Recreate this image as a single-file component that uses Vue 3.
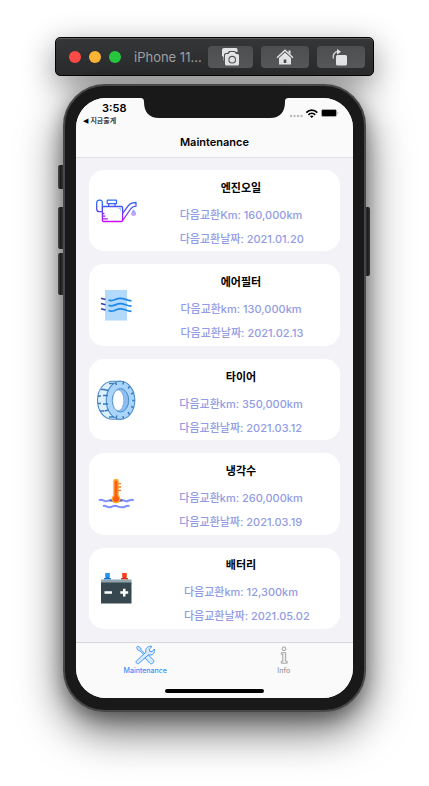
<script setup>
import { ref } from 'vue'

const activeTab = ref('maintenance')

const items = [
  { id: 'oil', title: '엔진오일', distance: '다음교환Km: 160,000km', date: '다음교환날짜: 2021.01.20' },
  { id: 'filter', title: '에어필터', distance: '다음교환km: 130,000km', date: '다음교환날짜: 2021.02.13' },
  { id: 'tire', title: '타이어', distance: '다음교환km: 350,000km', date: '다음교환날짜: 2021.03.12' },
  { id: 'coolant', title: '냉각수', distance: '다음교환km: 260,000km', date: '다음교환날짜: 2021.03.19' },
  { id: 'battery', title: '배터리', distance: '다음교환km: 12,300km', date: '다음교환날짜: 2021.05.02' }
]
</script>

<template>
  <div class="desktop">
    <header class="toolbar">
      <div class="lights">
        <button class="light red" type="button" aria-label="Close"></button>
        <button class="light yellow" type="button" aria-label="Minimize"></button>
        <button class="light green" type="button" aria-label="Zoom"></button>
      </div>
      <span class="device-name">iPhone 11...</span>
      <div class="tools">
        <button class="tool" type="button" aria-label="Screenshot">
          <svg width="18" height="18" viewBox="0 0 18 18">
            <path d="M2 0h12a1.500 1.500 0 0 1 1.500 1.500V4H14l-1-1H7L5.500 5H4a2 2 0 0 0-2 2v5.500H1.500V9L0 8V2a2 2 0 0 1 2-2z" fill="#e4e5e6" />
            <path d="M4.500 6h2L8 4h4.500L14 6h1.500A1.500 1.500 0 0 1 17 7.500V16a1.500 1.500 0 0 1-1.500 1.500h-11A1.500 1.500 0 0 1 3 16V7.500A1.500 1.500 0 0 1 4.500 6z" fill="#e4e5e6" />
            <circle cx="10.200" cy="11.700" r="3.300" fill="none" stroke="#55575a" stroke-width="1.100" />
          </svg>
        </button>
        <button class="tool" type="button" aria-label="Home">
          <svg width="18" height="18" viewBox="0 0 18 18">
            <path d="M1 9.700 9 2.200l8 7.500" fill="none" stroke="#e4e5e6" stroke-width="1.400" />
            <path d="M12.500 2.500h2v4l-2-2z" fill="#e4e5e6" />
            <path d="M9 4.500 15 10v6.500H3V10z" fill="#e4e5e6" />
            <path d="M7.700 11.500h2.600v3.500H7.700z" fill="#4b4d50" />
          </svg>
        </button>
        <button class="tool" type="button" aria-label="Rotate">
          <svg width="18" height="18" viewBox="0 0 18 18">
            <rect x="4" y="7" width="11" height="10.500" rx="1.500" fill="#e4e5e6" />
            <path d="M1.200 10.500C.5 6 3 3.700 6 3.700" fill="none" stroke="#e4e5e6" stroke-width="1.300" />
            <path d="M5 1l4 2.700-4 2.700z" fill="#e4e5e6" />
          </svg>
        </button>
      </div>
    </header>

    <div class="phone">
      <i class="side mute"></i>
      <i class="side volume-up"></i>
      <i class="side volume-down"></i>
      <i class="side power"></i>

      <div class="screen">
        <div class="top">
          <div class="status">
            <div class="status-left">
              <span class="clock">3:58</span>
              <button class="back" type="button"><span class="arrow">◀</span>지금줄게</button>
            </div>
            <svg class="notch" width="149" height="20" viewBox="0 0 149 20">
              <path d="M0 0h149c-3 0-4 1-4 4 0 10-5 16-15 16H19C9 20 4 14 4 4 4 1 3 0 0 0z" fill="#191919" />
            </svg>
            <div class="status-right">
              <svg width="50" height="11" viewBox="0 0 50 11">
                <g fill="#b9b9bb">
                  <circle cx="2" cy="8" r="1.200" /><circle cx="5.500" cy="8" r="1.200" />
                  <circle cx="9" cy="8" r="1.200" /><circle cx="12.500" cy="8" r="1.200" />
                </g>
                <g fill="none" stroke="#000" stroke-width="1.700">
                  <path d="M17.300 4.600c3-3.200 8-3.200 11 0" />
                  <path d="M19.400 6.800c1.900-1.900 4.900-1.900 6.800 0" />
                </g>
                <path d="M21 8.200c1-.9 2.600-.9 3.600 0l-1.800 1.900z" fill="#000" />
                <rect x="32.500" y="1.500" width="15" height="7" rx="1.500" fill="#6d6d6f" stroke="#a2a2a4" />
                <rect x="33" y="2" width="14" height="6" rx="1" fill="#000" />
                <path d="M48.500 3.700c1 .4 1 2.200 0 2.600z" fill="#8e8e90" />
              </svg>
            </div>
          </div>
          <h1 class="nav-title">Maintenance</h1>
        </div>

        <main class="list">
          <article v-for="item in items" :key="item.id" class="card">
            <svg v-if="item.id === 'oil'" class="picture" viewBox="0 0 42 42">
              <defs>
                <linearGradient id="oil-line" gradientUnits="userSpaceOnUse" x1="0" y1="9" x2="0" y2="32">
                  <stop offset="0" stop-color="#2674f5" />
                  <stop offset=".5" stop-color="#5746f2" />
                  <stop offset="1" stop-color="#cf08f5" />
                </linearGradient>
                <linearGradient id="oil-drop" x1="0" y1="0" x2="0" y2="1">
                  <stop offset="0" stop-color="#78b9f8" />
                  <stop offset="1" stop-color="#dc9df8" />
                </linearGradient>
              </defs>
              <g fill="none" stroke="url(#oil-line)" stroke-width="1.300" stroke-linejoin="round">
                <path d="M7.300 19.500V12.500a2 2 0 0 0-2-2.300H4.500c-2 0-2.800 1-2.800 2.800v6c0 1.700 1 2.700 2.600 2.700h3" />
                <rect x="12.200" y="10.200" width="9.300" height="3.500" rx=".5" />
                <path d="M13.700 13.700v2.600M20 13.700v2.600" />
                <rect x="7.400" y="16.500" width="20.200" height="15" rx="1.300" />
                <path d="M7.400 23.500h2M7.400 26.200h3M7.400 28.900h5.500" />
                <path d="M27.600 23.300c2.800-2.700 5-8 8-9.700 1.500-.9 3.500-1 5.400-1.100v3.600c-2.500-.1-3.600.8-5 2.400L27.600 30.500" />
              </g>
              <path d="M22 18h4v4c-.6-2.500-1.500-3.500-4-4z" fill="#9acdfb" />
              <path d="M38.600 19.200c1.300 1.900 2.500 3 2.500 4.400a2.500 2.500 0 0 1-5 0c0-1.400 1.200-2.500 2.500-4.400z" fill="url(#oil-drop)" />
            </svg>

            <svg v-else-if="item.id === 'filter'" class="picture" viewBox="0 0 42 42">
              <rect x="10" y="6" width="22" height="30.500" fill="#b3dafb" />
              <g fill="none" stroke="#1e88ea" stroke-width="1.700">
                <path v-for="y in [16, 21.300, 26.600]" :key="y" :d="`M13.500 ${y}c5 2.300 7-2 12-1.700 4 .2 6 2 11 2.500`" />
              </g>
              <g fill="none" stroke="#303fa5" stroke-width="1.700">
                <path v-for="y in [14.300, 19.500, 24.800]" :key="y" :d="`M6 ${y}l4.500 1.200`" />
              </g>
            </svg>

            <svg v-else-if="item.id === 'tire'" class="picture" viewBox="0 0 42 42">
              <path d="M26 2.300H18C9 2.300 2.500 10.500 2.500 21.300S9 40.300 18 40.300h8z" fill="#dcefff" stroke="#4a8ac8" stroke-width="1.100" />
              <ellipse cx="25.500" cy="21.300" rx="14.300" ry="19" fill="#a9d5fc" stroke="#4a8ac8" stroke-width="1.100" />
              <ellipse cx="25.500" cy="21.300" rx="8.200" ry="11.700" fill="#8bbdf0" stroke="#4a8ac8" />
              <ellipse cx="23.200" cy="21.300" rx="5.500" ry="10.400" fill="#fff" stroke="#6ba3da" stroke-width=".6" />
              <g stroke="#3979b8" stroke-width="1.500" fill="none">
                <path d="M14 4.500h5M6 10.500h4M8.500 10.500l5 1M3 17h3M8 16.500h5M3 24.500h3M8 25h5M5 32h4M9.500 32l4-1M14 38h5" />
                <path d="M20.500 3.500l1 2.500M28.500 2.700L28 5.500M34.500 7.500L33 9.500M38.300 14l-2.300 1.200M39.800 21.500h-2.500M38.500 28.500l-2.300-1M34.500 35.300L33 33M28.500 39.700l-.5-2.500M21 39l1-2.500" />
              </g>
            </svg>

            <svg v-else-if="item.id === 'coolant'" class="picture" viewBox="0 0 42 42">
              <g fill="none" stroke="#7e90ff" stroke-width="2">
                <path d="M4 27.500c3-2.300 4.500 1 7 .8 2.500-.3 3.500-2 6-.8s5 1.500 8 0 4 .5 6 .8c2.500.2 5-3 7.700-.8" />
                <path d="M8 33c3-1 3.500 1.500 6.500 1.300S18.500 32 21.500 33s4 1.500 6.500 1.200 4-2.200 6.500-1" />
              </g>
              <path d="M14.500 27.500h13" stroke="#59669c" stroke-width="2" />
              <path d="M18.300 8.500a2.700 2.700 0 0 1 5.400 0v14a4.400 4.400 0 1 1-5.400 0z" fill="#ffa729" />
              <path d="M23.300 10.700h2.800M23.300 14h2.800M23.300 17.300h2.800" stroke="#ff7a1d" stroke-width="1.300" />
              <path d="M19.600 9a1.400 1.400 0 0 1 2.800 0v14.200a3.100 3.100 0 1 1-2.800 0z" fill="#ff5c18" />
            </svg>

            <svg v-else class="picture" viewBox="0 0 42 42">
              <path d="M10.500 6h4v5h-4zM9 11h7v1.500H9z" fill="#1976d2" />
              <path d="M10.500 6h4v4h-4z" fill="#2196f3" />
              <path d="M27.500 6h4v5h-4zM26 11h7v1.500h-7z" fill="#dd2c10" />
              <path d="M27.500 6h4v4h-4z" fill="#ff3d16" />
              <path d="M6 12.500h30.500V17H6z" fill="#90a4ae" />
              <path d="M6 15.500h30.500v21H6z" fill="#37474f" />
              <path d="M9.500 24.300h7.500v2.500H9.500zM25.300 24.300H28v-2.600h2.500v2.600h2.700v2.500h-2.700v2.700H28v-2.700h-2.700z" fill="#fff" />
            </svg>

            <div class="info">
              <h2 class="card-title">{{ item.title }}</h2>
              <div class="details">
                <p>{{ item.distance }}</p>
                <p class="date">{{ item.date }}</p>
              </div>
            </div>
          </article>
        </main>

        <footer class="bottom">
          <nav class="tabs">
            <button class="tab" :class="{ active: activeTab === 'maintenance' }" type="button" @click="activeTab = 'maintenance'">
              <svg width="20" height="20" viewBox="0 0 20 20" fill="#d8eaff" stroke="currentColor" stroke-width=".9" stroke-linejoin="round">
                <path d="M1.500 2.500 2.800 1.200 5.700 3l.4 1.800 4.200 4.300-1 1L5 5.900l-1.700-.4z" />
                <path d="M11.300 11.200l1.700-1.700 5.400 5.500c1.500 1.800-1.500 5-3.400 3.400l-5-5.400z" />
                <path d="M3.700 18.500c-1.700.9-3.500-1.200-2.200-2.600l9.300-8.700C9.800 3.500 13.500.2 17 1.500l-2.800 2.700.5 2.100 2.200.5 2.400-2.800c1.300 3.800-2 7-5.800 5.800z" />
              </svg>
              Maintenance
            </button>
            <button class="tab" :class="{ active: activeTab === 'info' }" type="button" @click="activeTab = 'info'">
              <svg width="20" height="20" viewBox="0 0 20 20" fill="#f1f1f1" stroke="currentColor" stroke-width=".9">
                <circle cx="10" cy="3.800" r="1.900" />
                <path d="M7.300 7.700h4.400v8.500h1.500v2H7.300v-2h1.500V9.500H7.300z" />
              </svg>
              Info
            </button>
          </nav>
          <div class="home-indicator"></div>
        </footer>
      </div>
    </div>
  </div>
</template>

<style>
body {
  margin: 0;
  background: #fff;
}
</style>

<style scoped>
* {
  box-sizing: border-box;
}

button {
  margin: 0;
  padding: 0;
  border: 0;
  background: none;
  font: inherit;
  color: inherit;
}

h1,
h2,
p {
  margin: 0;
}

svg {
  display: block;
}

.desktop {
  display: flex;
  flex-direction: column;
  gap: 8px;
  min-height: 100vh;
  padding: 37px 55px 74px;
  font-family: Inter, "Noto Sans CJK KR", sans-serif;
}

.toolbar {
  display: flex;
  align-items: center;
  height: 39px;
  padding: 0 8px 0 13px;
  border: 1px solid #050505;
  border-radius: 5px;
  background: linear-gradient(#343638, #292b2d);
  box-shadow: inset 0 1px 0 #5a5c5e, 0 10px 32px rgba(0, 0, 0, 0.45);
}

.lights {
  display: flex;
  gap: 8px;
}

.light {
  width: 12px;
  height: 12px;
  border-radius: 50%;
}

.red {
  background: #ff4b47;
}

.yellow {
  background: #fdb536;
}

.green {
  background: #27c840;
}

.device-name {
  flex: 1;
  padding-left: 13px;
  font-size: 13px;
  line-height: 16px;
  color: #a0a1a3;
  white-space: nowrap;
}

.tools {
  display: flex;
  gap: 8px;
}

.tool {
  display: grid;
  place-items: center;
  width: 48px;
  height: 22px;
  border-radius: 4px;
  background: linear-gradient(#4c4e50, #57595b);
}

.tool:first-child {
  width: 45px;
}

.phone {
  position: relative;
  display: flex;
  flex: 1;
  margin: 0 8px;
  padding: 12px 11px;
  border: 2px solid #47484a;
  border-radius: 42px;
  background: #191919;
  box-shadow: 0 18px 44px rgba(0, 0, 0, 0.62), 0 6px 18px rgba(0, 0, 0, 0.3);
}

.side {
  position: absolute;
  left: -7px;
  width: 5px;
  border-radius: 2px 0 0 2px;
  background: linear-gradient(90deg, #4b4c4e, #1c1c1e 50%, #333436);
}

.mute {
  top: 79px;
  height: 24px;
}

.volume-up {
  top: 121px;
  height: 42px;
}

.volume-down {
  top: 167px;
  height: 42px;
}

.power {
  top: 121px;
  right: -6px;
  left: auto;
  height: 69px;
  border-radius: 0 2px 2px 0;
}

.screen {
  display: flex;
  flex: 1;
  flex-direction: column;
  min-width: 0;
  overflow: hidden;
  border-radius: 30px;
  background: #f3f2f6;
}

.top {
  border-bottom: 1px solid #dfdfe1;
  background: #fbfafb;
}

.status {
  display: grid;
  grid-template-columns: 1fr 149px 1fr;
  height: 29px;
}

.status-left {
  display: flex;
  flex-direction: column;
  padding: 4px 0 0 7px;
}

.clock {
  padding-left: 19px;
  font-size: 11px;
  font-weight: 600;
  line-height: 13px;
}

.back {
  display: flex;
  gap: 2px;
  align-items: center;
  font-size: 7px;
  font-weight: 500;
  line-height: 12px;
  white-space: nowrap;
}

.arrow {
  font-family: "DejaVu Sans", sans-serif;
}

.status-right {
  padding: 10px 0 0;
}

.nav-title {
  padding: 8px 0 7px;
  font-size: 11px;
  font-weight: 600;
  line-height: 15px;
  text-align: center;
}

.list {
  display: flex;
  flex: 1;
  flex-direction: column;
  gap: 13px;
  padding: 12px 13px 13px;
}

.card {
  display: flex;
  flex: 1;
  align-items: center;
  padding-left: 6px;
  border-radius: 15px;
  background: #fff;
}

.picture {
  flex: none;
  width: 42px;
  height: 42px;
}

.info {
  display: flex;
  flex: 1;
  flex-direction: column;
  align-items: center;
  padding: 5px 0 0 5px;
}

.card-title {
  margin-bottom: 3px;
  font-size: 11px;
  font-weight: 600;
  line-height: 24px;
}

.details {
  font-size: 11px;
  font-weight: 500;
  line-height: 24px;
  color: #929be3;
  white-space: nowrap;
}

/* The distance row sets the block's width; the date starts at its left edge. */
.date {
  width: 0;
}

.bottom {
  display: flex;
  flex-direction: column;
  align-items: center;
  justify-content: space-between;
  height: 56px;
  padding-bottom: 5px;
  border-top: 1px solid #d7d7da;
  background: #fbfafb;
}

.tabs {
  display: flex;
  width: 100%;
}

.tab {
  display: flex;
  flex: 1;
  flex-direction: column;
  align-items: center;
  padding-top: 2px;
  font-size: 7px;
  font-weight: 500;
  line-height: 12px;
  color: #9a9a9c;
}

.tab.active {
  color: #3590fb;
}

.home-indicator {
  width: 36%;
  height: 4px;
  border-radius: 2px;
  background: #000;
}
</style>
